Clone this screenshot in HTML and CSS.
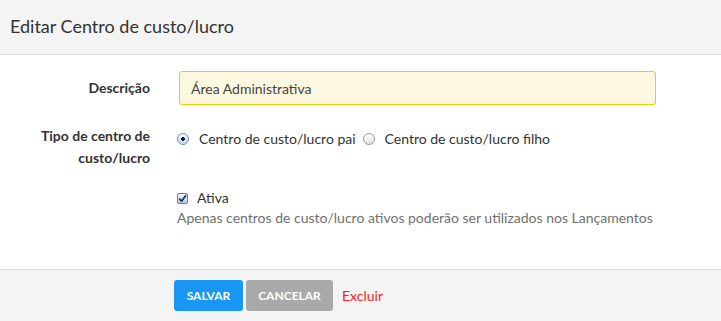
FILE: index.html
```html
<!DOCTYPE html>
<html lang="pt">
<head>
<meta charset="utf-8">
<link rel="stylesheet" href="styles.css">
</head>
<body>
<div class="modal">
  <div class="modal-header">
    <h1 class="title">Editar Centro de custo/lucro</h1>
  </div>
  <div class="modal-body">
    <div class="row row-desc">
      <label class="label">Descrição</label>
      <div class="control">
        <input class="text-input" type="text" value="Área Administrativa">
      </div>
    </div>
    <div class="row row-tipo">
      <label class="label">Tipo de centro de custo/lucro</label>
      <div class="control radios">
        <label class="opt"><span class="radio checked"></span>Centro de custo/lucro pai</label>
        <label class="opt"><span class="radio"></span>Centro de custo/lucro filho</label>
      </div>
    </div>
    <div class="row row-ativa">
      <div class="label"></div>
      <div class="control">
        <label class="opt"><span class="checkbox"><svg width="9" height="9" viewBox="0 0 9 9"><path d="M1.2 4.6 L3.6 7.2 L8 1.2" fill="none" stroke="#1f3550" stroke-width="1.8"/></svg></span>Ativa</label>
        <div class="help">Apenas centros de custo/lucro ativos poderão ser utilizados nos Lançamentos</div>
      </div>
    </div>
  </div>
  <div class="modal-footer">
    <button class="btn btn-primary">SALVAR</button>
    <button class="btn btn-gray">CANCELAR</button>
    <a class="link-danger">Excluir</a>
  </div>
</div>
</body>
</html>
```

FILE: styles.css
```css
html, body {
  margin: 0;
  padding: 0;
  background: #fff;
}
body {
  font-family: Lato, "Open Sans", sans-serif;
  color: #333;
  font-size: 14px;
  width: 721px;
  height: 321px;
  overflow: hidden;
}
.modal {
  display: flex;
  flex-direction: column;
  height: 321px;
}
.modal-header {
  background: #f4f4f4;
  border-bottom: 1px solid #dcdcdc;
  height: 55px;
  box-sizing: border-box;
  flex: none;
  display: flex;
  align-items: center;
  padding-left: 10px;
}
.title {
  margin: 0;
  font-size: 18px;
  font-weight: 400;
  color: #333;
  position: relative;
  top: -1px;
}
.modal-body {
  flex: 1;
  padding-top: 16px;
}
.row {
  display: grid;
  grid-template-columns: 150px 1fr;
  column-gap: 24px;
}
.label {
  text-align: right;
  font-weight: 700;
  color: #333;
  line-height: 22px;
}
.row-desc {
  align-items: center;
  height: 34px;
}
.row-tipo {
  margin-top: 20px;
}
.row-tipo .label {
  padding-left: 26px;
}
.row-ativa {
  margin-top: 18px;
}
.control {
  min-width: 0;
  padding-left: 3px;
}
.text-input {
  box-sizing: border-box;
  margin-left: 2px;
  width: 477px;
  height: 34px;
  border: 1px solid #f5c800;
  border-radius: 3px;
  background: #fff8e1;
  font-family: Lato, sans-serif;
  font-size: 14px;
  color: #444;
  padding: 0 11px;
  outline: none;
}
.radios {
  display: flex;
  align-items: flex-start;
  gap: 7px;
  padding-top: 3px;
}
.opt {
  display: inline-flex;
  align-items: center;
  line-height: 22px;
  color: #333;
}
.radio {
  box-sizing: border-box;
  width: 12px;
  height: 12px;
  border-radius: 50%;
  border: 1px solid #9a9a9a;
  background: linear-gradient(#fdfdfd, #e2e2e2);
  margin: 0 10px 0 0;
  display: inline-flex;
  align-items: center;
  justify-content: center;
}
.radio.checked {
  border-color: #6d8fb8;
  background: radial-gradient(circle, #1a1a1a 0 1.6px, transparent 2px), linear-gradient(#f4f8fd, #c6d8ee);
}
.checkbox {
  box-sizing: border-box;
  width: 11px;
  height: 11px;
  border: 1px solid #5f7fa6;
  border-radius: 2px;
  background: linear-gradient(#eef4fb, #bcd0ea);
  margin: 0 9px 0 0;
  display: inline-flex;
  align-items: center;
  justify-content: center;
}
.help {
  color: #707070;
  line-height: 18px;
  margin-top: 0;
}
.modal-footer {
  background: #f4f4f4;
  border-top: 1px solid #dcdcdc;
  height: 52px;
  flex: none;
  display: flex;
  align-items: flex-start;
  padding-left: 174px;
  padding-top: 10px;
  box-sizing: border-box;
}
.btn {
  font-family: Lato, sans-serif;
  font-weight: 700;
  font-size: 12px;
  color: #fff;
  border: none;
  border-radius: 3px;
  height: 31px;
  padding: 0;
  margin-right: 3px;
  cursor: pointer;
}
.btn-primary {
  background: #1a97f3;
  width: 69px;
}
.btn-gray {
  background: #a9a9a9;
  width: 87px;
}
.link-danger {
  color: #ff1a1a;
  font-size: 14px;
  line-height: 31px;
  margin-left: 6px;
}
```
